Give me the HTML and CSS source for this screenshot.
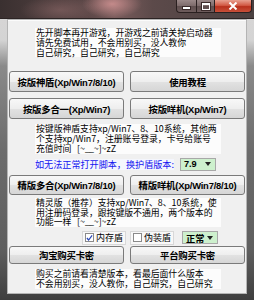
FILE: index.html
```html
<!DOCTYPE html>
<html lang="zh-CN">
<head>
    <meta charset="UTF-8">
    <meta name="viewport" content="width=device-width, initial-scale=1.0">
    <title>脚本启动器</title>
    <link rel="stylesheet" href="styles.css">
</head>
<body>
    <div class="window">
        <div class="titlebar">
            <div class="caption">
                <span class="cap-btn cap-min"><i></i></span>
                <span class="cap-btn cap-max"><i></i></span>
                <span class="cap-btn cap-close">
                    <svg width="10" height="8" viewBox="0 0 10 8"><path d="M1.5 0.5 L8.5 7.5 M8.5 0.5 L1.5 7.5" stroke="#fff" stroke-width="2"/></svg>
                </span>
            </div>
        </div>
        <div class="client">
            <p class="note note-top">先开脚本再开游戏，开游戏之前请关掉启动器<br>请先免费试用，不会用别买，没人教你<br>自己研究，自己研究，自己研究</p>

            <div class="row row-1">
                <button class="btn">按版神盾(Xp/Win7/8/10)</button>
                <button class="btn">使用教程</button>
            </div>
            <div class="row row-2">
                <button class="btn">按版多合一(Xp/Win7)</button>
                <button class="btn">按版咩机(Xp/Win7)</button>
            </div>

            <p class="note note-2">按键版神盾支持xp/Win7、8、10系统，其他两<br>个支持xp/Win7，注册账号登录，卡号给账号<br>充值时间&nbsp;&nbsp;&nbsp;[~﹏~]~zZ</p>

            <div class="line">
                <span class="link">如无法正常打开脚本，换护盾版本:</span>
                <span class="combo combo-ver">7.9<svg width="6" height="4" viewBox="0 0 6 4"><path d="M0 0 H6 L3 4 Z" fill="#222"/></svg></span>
            </div>

            <div class="row row-3">
                <button class="btn">精版多合(Xp/Win7/8/10)</button>
                <button class="btn">精版咩机(Xp/Win7/8/10)</button>
            </div>

            <p class="note note-3">精灵版（推荐）支持xp/Win7、8、10系统，使<br>用注册码登录，跟按键版不通用，两个版本的<br>功能一样&nbsp;&nbsp;&nbsp;[~﹏~]~zZ</p>

            <div class="line line-check">
                <label class="check check-on"><span class="box"><svg width="8" height="8" viewBox="0 0 8 8"><path d="M1 4 L3 6.3 L7 1" stroke="#2a48b8" stroke-width="1.4" fill="none"/></svg></span>内存盾</label>
                <label class="check"><span class="box"></span>伪装盾</label>
                <span class="combo combo-mode">正常<svg width="6" height="4" viewBox="0 0 6 4"><path d="M0 0 H6 L3 4 Z" fill="#222"/></svg></span>
            </div>

            <div class="row row-4">
                <button class="btn">淘宝购买卡密</button>
                <button class="btn">平台购买卡密</button>
            </div>

            <p class="note note-4">购买之前请看清楚版本，看最后面什么版本<br>不会用别买，没人教你，自己研究，自己研究</p>
        </div>
    </div>
</body>
</html>
```

FILE: styles.css
```css
body {
    margin: 0;
    width: 254px;
    height: 300px;
    overflow: hidden;
    font-family: "Noto Sans CJK SC", sans-serif;
}
.window {
    width: 254px;
    height: 300px;
    box-sizing: border-box;
    padding: 0 8px 7px;
    display: flex;
    flex-direction: column;
    background: linear-gradient(180deg, #d8d6d6 0, #d4d4d4 40px, #8a8a8a 66px, #6c6c6c 150px, #5e5e5e 250px, #3e3e3e 300px);
}
.titlebar {
    height: 18px;
    margin: 0 -8px 1px;
    display: flex;
    justify-content: flex-end;
    background:
        radial-gradient(ellipse 30px 14px at 112px 4px, rgba(214, 150, 150, 0.8), rgba(214, 150, 150, 0)),
        radial-gradient(ellipse 40px 14px at 60px 10px, rgba(150, 110, 110, 0.5), rgba(150, 110, 110, 0)),
        linear-gradient(90deg, #3a3030 0, #5a4646 35%, #7a5c5c 45%, #5c4a4a 60%, #4a4040 100%);
    border-bottom: 1px solid #2c2424;
}
.caption {
    display: flex;
    height: 13px;
    margin-right: 2px;
}
.cap-btn {
    box-sizing: border-box;
    height: 13px;
    border: 1px solid #2a2020;
    border-top: 0;
    display: flex;
    align-items: center;
    justify-content: center;
    background: linear-gradient(180deg, #9a8888 0, #7c6a6a 50%, #5e4e4e 51%, #6e5c5c 100%);
}
.cap-min {
    width: 20px;
    border-bottom-left-radius: 4px;
    border-right: 0;
}
.cap-min i {
    width: 7px;
    height: 2px;
    margin-top: 3px;
    background: #fff;
    box-shadow: 0 0 0 1px #3a2a2a;
}
.cap-max {
    width: 18px;
    border-right: 0;
}
.cap-max i {
    width: 6px;
    height: 4px;
    border: 1px solid #fff;
    border-top-width: 2px;
    box-shadow: 0 0 0 1px #3a2a2a;
}
.cap-close {
    width: 38px;
    border-bottom-right-radius: 4px;
    background: linear-gradient(180deg, #e8a090 0, #d25a45 45%, #b8301c 55%, #c8503a 100%);
}
.client {
    flex: 1;
    background: #f0f0f0;
    border-top: 1px solid #fbfbfb;
    box-shadow: 0 0 0 1px #b4b4b4;
    display: flex;
    flex-direction: column;
}
.note {
    margin: 0 0 0 27px;
    width: 186px;
    padding: 0 1px;
    box-sizing: border-box;
    background: #fcfcfc;
    color: #000;
    font-size: 8.9px;
    line-height: 9.8px;
    letter-spacing: -0.05px;
    white-space: nowrap;
}
.note-top {
    margin-top: 7px;
}
.note-2 {
    margin-top: 5px;
}
.note-3 {
    margin-top: 3px;
}
.note-4 {
    margin-top: 5px;
    line-height: 10px;
}
.row {
    display: flex;
    gap: 6px;
    padding-left: 1px;
}
.row-1 {
    margin-top: 14px;
}
.row-2 {
    margin-top: 6px;
}
.row-3 {
    margin-top: 4px;
}
.row-4 {
    margin-top: 2px;
}
.btn {
    width: 115px;
    height: 21px;
    padding: 0;
    border: 1px solid #7a7a7a;
    border-radius: 3px;
    background: linear-gradient(180deg, #f8f8f8 0, #eeeeee 50%, #e2e2e2 51%, #d6d6d6 100%);
    color: #000;
    font-family: "Liberation Sans", "Noto Sans CJK SC", sans-serif;
    font-size: 9.4px;
    font-weight: bold;
    letter-spacing: -0.2px;
    white-space: nowrap;
}
.row-3 .btn {
    height: 20px;
}
.row-4 .btn {
    height: 18px;
}
.line {
    display: flex;
    align-items: center;
    height: 13px;
    margin-top: 4px;
    padding-left: 27px;
}
.link {
    color: #1414f0;
    font-size: 9.1px;
    line-height: 11px;
    background: #f4f6fd;
    white-space: nowrap;
}
.combo {
    box-sizing: border-box;
    width: 36px;
    height: 13px;
    display: flex;
    align-items: center;
    justify-content: space-between;
    padding: 0 4px 0 3px;
    border: 1px solid #a8a8a8;
    background: #cdf0cd;
    color: #000;
    font-family: "Liberation Sans", "Noto Sans CJK SC", sans-serif;
    font-size: 9.2px;
    font-weight: bold;
}
.combo-ver {
    margin-left: 6px;
}
.line-check {
    margin-top: 4px;
    padding-left: 74px;
}
.check {
    display: flex;
    align-items: center;
    gap: 2px;
    height: 12px;
    padding: 0 2px;
    font-size: 9px;
    color: #000;
    background: #f8f8f8;
    border: 1px solid #d8d8d8;
}
.check + .check {
    margin-left: 4px;
}
.box {
    box-sizing: border-box;
    width: 9px;
    height: 9px;
    border: 1px solid #8a8a8a;
    background: #fff;
    display: flex;
    align-items: center;
    justify-content: center;
}
.combo-mode {
    margin-left: 8px;
}
```
